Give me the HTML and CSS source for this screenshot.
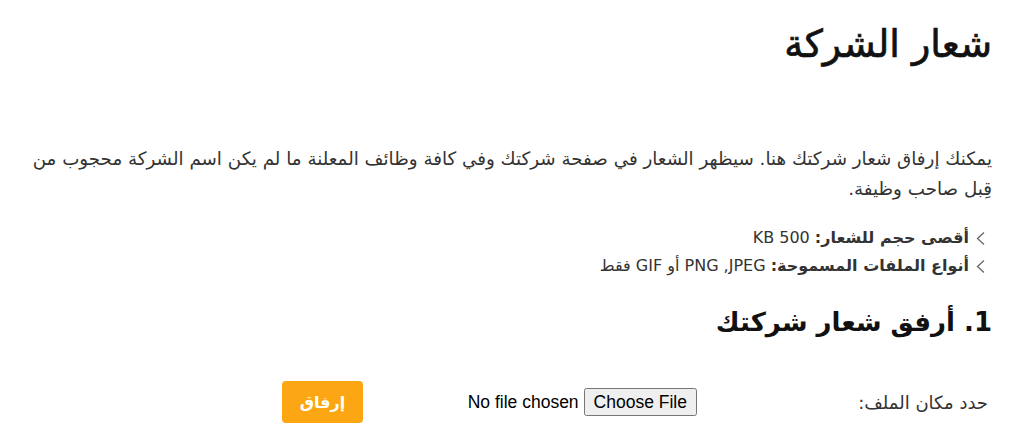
FILE: index.html
```html
<!DOCTYPE html>
<html lang="ar" dir="rtl">
<head>
<meta charset="utf-8">
<link rel="stylesheet" href="styles.css">
</head>
<body>
<main class="page">
  <h1 class="title">شعار الشركة</h1>
  <p class="intro">يمكنك إرفاق شعار شركتك هنا. سيظهر الشعار في صفحة شركتك وفي كافة وظائف المعلنة ما لم يكن اسم الشركة محجوب من قِبل صاحب وظيفة.</p>
  <ul class="rules">
    <li><svg class="chev" viewBox="0 0 9 13" width="9" height="13"><path d="M8 0.5 L1.5 6.5 L8 12.5" fill="none" stroke="#666" stroke-width="1.3"/></svg><span><b>أقصى حجم للشعار:</b> 500 KB</span></li>
    <li><svg class="chev" viewBox="0 0 9 13" width="9" height="13"><path d="M8 0.5 L1.5 6.5 L8 12.5" fill="none" stroke="#666" stroke-width="1.3"/></svg><span><b>أنواع الملفات المسموحة:</b> JPEG,&rlm; PNG أو GIF فقط</span></li>
  </ul>
  <h2 class="step">1. أرفق شعار شركتك</h2>
  <form class="upload">
    <label class="upload-label" for="file">حدد مكان الملف:</label>
    <input class="file" id="file" type="file">
    <button class="attach" type="button">إرفاق</button>
  </form>
</main>
</body>
</html>
```
FILE: styles.css
```css
html, body { margin: 0; padding: 0; background: #fff; }
body { font-family: "DejaVu Sans", sans-serif; color: #333; }
.page { padding: 0 28px 0 27px; }
.title { font-size: 38px; font-weight: normal; color: #111; margin: 0; padding-top: 19px; line-height: 50px; -webkit-text-stroke: 0.7px #111; }
.intro { font-size: 18.3px; line-height: 30px; margin: 75px 0 0 0; }
.rules { list-style: none; margin: 20px 0 0 0; padding: 0; font-size: 16px; }
.rules li { display: flex; align-items: center; gap: 7px; line-height: 28px; padding-right: 7px; }
.rules b { font-weight: bold; color: #333; }
.step { font-size: 26px; font-weight: bold; color: #111; margin: 22px 0 0 0; line-height: 40px; }
.upload { display: flex; align-items: center; margin-top: 39px; padding-right: 4px; }
.upload-label { font-size: 18px; width: 291px; color: #333; }
.file { font-family: "Liberation Sans", Arial, sans-serif; font-size: 17.5px; color: #000; direction: rtl; width: 240px; }
.file::file-selector-button { font-family: "Liberation Sans", Arial, sans-serif; font-size: 17.5px; height: 28px; padding: 0 8px; margin-left: 5px; }
.attach { margin-right: 94px; background: #fba612; color: #fff; border: none; border-radius: 4px; width: 81px; height: 42px; font-family: "DejaVu Sans", sans-serif; font-weight: bold; font-size: 16px; }
```
